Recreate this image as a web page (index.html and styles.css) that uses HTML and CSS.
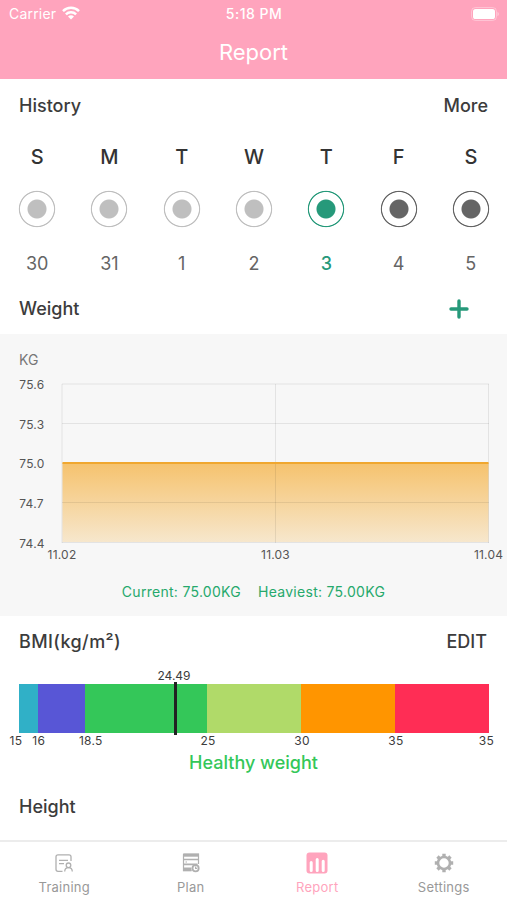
FILE: index.html
```html
<!doctype html>
<html lang="en">
<head>
    <meta charset="UTF-8">
    <meta name="viewport" content="width=device-width, initial-scale=1.0">
    <title>Report</title>
    <link rel="stylesheet" href="styles.css">
</head>
<body>
    <div class="app">
        <header class="header">
            <div class="status">
                <div class="carrier">
                    <span>Carrier</span>
                    <svg width="18" height="14" viewBox="0 0 18 14" fill="none" stroke="#fff" stroke-width="2.5">
                        <path d="M1 5.1a11.4 11.4 0 0 1 16 0"/>
                        <path d="M3.9 8.3a7.3 7.3 0 0 1 10.2 0"/>
                        <path d="M9 13.6L6 10.6a4.3 4.3 0 0 1 6 0z" fill="#fff" stroke="none"/>
                    </svg>
                </div>
                <div class="time">5:18 PM</div>
                <div class="battery">
                    <svg width="28" height="14" viewBox="0 0 28 14">
                        <rect x=".5" y=".5" width="25" height="13" rx="4" fill="none" stroke="#fff" stroke-opacity=".35"/>
                        <rect x="2" y="2" width="22" height="10" rx="2.6" fill="#fff"/>
                        <path d="M26.5 4.8q1.3.7 1.3 2.2t-1.3 2.2z" fill="#fff" fill-opacity=".45"/>
                    </svg>
                </div>
            </div>
            <h1 class="title">Report</h1>
        </header>

        <main class="main">
            <section class="history">
                <div class="row">
                    <h2>History</h2>
                    <a class="action">More</a>
                </div>
                <div class="week">
                    <div class="day past"><b>S</b><i class="ring"></i><span>30</span></div>
                    <div class="day past"><b>M</b><i class="ring"></i><span>31</span></div>
                    <div class="day past"><b>T</b><i class="ring"></i><span>1</span></div>
                    <div class="day past"><b>W</b><i class="ring"></i><span>2</span></div>
                    <div class="day today"><b>T</b><i class="ring"></i><span>3</span></div>
                    <div class="day"><b>F</b><i class="ring"></i><span>4</span></div>
                    <div class="day"><b>S</b><i class="ring"></i><span>5</span></div>
                </div>
            </section>

            <section class="weight">
                <div class="row weight-row">
                    <h2>Weight</h2>
                    <svg class="add" width="20" height="20" viewBox="0 0 20 20" stroke="#26997a" stroke-width="3.4" stroke-linecap="round">
                        <path d="M10 2v16M2 10h16"/>
                    </svg>
                </div>
                <div class="panel">
                    <svg class="chart" width="507" height="232" viewBox="0 0 507 232">
                        <defs>
                            <linearGradient id="fill" x1="0" y1="0" x2="0" y2="1">
                                <stop offset="0" stop-color="#f5a623" stop-opacity=".65"/>
                                <stop offset="1" stop-color="#f5a623" stop-opacity=".2"/>
                            </linearGradient>
                        </defs>
                        <text class="unit" x="19" y="30.5">KG</text>
                        <rect x="62.5" y="129" width="426" height="79" fill="url(#fill)"/>
                        <!-- grid -->
                        <path class="grid" d="M62 50H489M62 89.5H489M62 168.5H489M62 208.5H489M62 50V209M275.5 50V209M488.5 50V209"/>
                        <path class="line" d="M62.5 129H488.5"/>
                        <g class="axis">
                            <text x="19.3" y="55">75.6</text>
                            <text x="19.3" y="94.5">75.3</text>
                            <text x="19.3" y="134">75.0</text>
                            <text x="19.3" y="173.5">74.7</text>
                            <text x="19.3" y="213.5">74.4</text>
                        </g>
                        <g class="axis dates">
                            <text x="62" y="225">11.02</text>
                            <text x="275.5" y="225">11.03</text>
                            <text x="488.5" y="225">11.04</text>
                        </g>
                    </svg>
                    <div class="summary">
                        <span>Current: 75.00KG</span>
                        <span>Heaviest: 75.00KG</span>
                    </div>
                </div>
            </section>

            <section class="bmi">
                <div class="row bmi-row">
                    <h2>BMI(kg/m²)</h2>
                    <a class="action">EDIT</a>
                </div>
                <div class="scale">
                    <div class="marker"><span>24.49</span></div>
                    <div class="seg severe"><span>15</span></div>
                    <div class="seg thin"><span>16</span></div>
                    <div class="seg healthy"><span>18.5</span></div>
                    <div class="seg over"><span>25</span></div>
                    <div class="seg obese"><span>30</span></div>
                    <div class="seg extreme"><span>35</span><span class="end">35</span></div>
                </div>
                <p class="result">Healthy weight</p>
            </section>

            <section class="row height-row">
                <h2>Height</h2>
            </section>
        </main>

        <nav class="tabs">
            <a class="tab">
                <svg width="22" height="22" viewBox="0 0 22 22" fill="none" stroke="currentColor" stroke-width="1.3">
                    <path d="M9.5 19.3H5q-2 0-2-2V4.8q0-2 2-2h11q2 0 2 2V9"/>
                    <path d="M6 8.3h9M6 11.7h5"/>
                    <circle cx="15.5" cy="13.3" r="2.3"/>
                    <path d="M11.7 19.5q.2-3.8 3.8-3.8t3.8 3.8"/>
                </svg>
                <span>Training</span>
            </a>
            <a class="tab">
                <svg width="22" height="22" viewBox="0 0 22 22" fill="none" stroke="currentColor" stroke-width="1.2">
                    <path d="M3.5 2.2h15V12M3.5 2.2v16.5h8"/>
                    <path d="M3 3.2h16" stroke-width="3"/>
                    <path d="M3.5 7.5h15M3.5 12.3h14" stroke-width="1.7"/>
                    <path d="M5.5 10h1.5"/>
                    <path d="M3 17.3h8.5" stroke-width="3.6"/>
                    <circle cx="15.6" cy="16.2" r="3.1" stroke-width="1.8"/>
                    <path d="M15.6 14.5v1.9h1.6"/>
                </svg>
                <span>Plan</span>
            </a>
            <a class="tab active">
                <svg width="22" height="22" viewBox="0 0 22 22">
                    <rect x=".5" y=".5" width="21" height="21" rx="3" fill="currentColor"/>
                    <path d="M5.2 10.5v7.9M11.2 7.5v10.9M17.2 9.3v9.1" stroke="#fff" stroke-width="3" stroke-linecap="round"/>
                </svg>
                <span>Report</span>
            </a>
            <a class="tab">
                <svg width="22" height="22" viewBox="0 0 22 22" fill="none" stroke="currentColor">
                    <circle cx="11" cy="11" r="6" stroke-width="2.6"/>
                    <path d="M11 1.8v3M11 17.2v3M1.8 11h3M17.2 11h3M4.5 4.5l2.1 2.1M15.4 15.4l2.1 2.1M4.5 17.5l2.1-2.1M15.4 6.6l2.1-2.1" stroke-width="3.4"/>
                </svg>
                <span>Settings</span>
            </a>
        </nav>
    </div>
</body>
</html>
```
FILE: styles.css
```css
* {margin: 0; padding: 0; box-sizing: border-box;}
body {
    font-family: Inter, "Liberation Sans", sans-serif;
    color: #3c3c3c;
    background: #fff;
}
svg {display: block;}
.app {
    display: flex;
    flex-direction: column;
    height: 900px;
    overflow: hidden;
}
.header {
    flex: none;
    height: 79px;
    background: #ffa4bd;
    color: #fff;
}
.status {
    display: grid;
    grid-template-columns: 1fr auto 1fr;
    align-items: center;
    height: 27px;
    padding: 0 8px 0 9px;
    font-size: 14px;
}
.carrier {
    display: flex;
    gap: 6px;
    align-items: center;
    letter-spacing: .2px;
}
.carrier svg {margin-top: -2px;}
.time {font-weight: 500; font-size: 14px; letter-spacing: .5px;}
.battery {justify-self: end;}
.title {
    line-height: 50px;
    font-size: 22px;
    font-weight: 400;
    text-align: center;
}
.main {flex: 1; min-height: 0;}
.row {
    display: flex;
    justify-content: space-between;
    align-items: center;
    height: 52px;
    padding: 0 19px;
}
h2, .action {font-size: 18px; font-weight: 500;}

/* week */
.week {
    display: grid;
    grid-template-columns: repeat(7, 1fr);
    padding-left: 1px;
}
.day {
    display: flex;
    flex-direction: column;
    align-items: center;
    color: #656565;
}
.day b {
    line-height: 52px;
    font-size: 20px;
    font-weight: 500;
    color: #333;
}
.day span {
    margin-top: 10px;
    line-height: 52px;
    font-size: 18px;
}
.ring {
    width: 38px;
    height: 38px;
    margin-top: 7px;
    border-radius: 50%;
    background: radial-gradient(circle closest-side, currentColor 9px, transparent 10px, transparent 16.6px, currentColor 17.3px, currentColor 17.8px, transparent 18.6px);
}
.past .ring {color: #bfbfbf;}
.today {color: #26997a;}
.today span {font-weight: 500;}

/* weight */
.weight-row {height: 44px; padding-right: 38px; padding-bottom: 7px;}
.panel {
    height: 282px;
    background: #f7f7f7;
}
.unit {font-size: 14px; fill: #777;}
.axis {font-size: 12px; letter-spacing: .2px; fill: #555;}
.dates {text-anchor: middle;}
.grid {fill: none; stroke: #000; stroke-opacity: .08;}
.line {stroke: #f0a72f; stroke-width: 2;}
.summary {
    display: flex;
    justify-content: center;
    gap: 17px;
    padding-top: 1px;
    line-height: 50px;
    font-size: 14px;
    letter-spacing: .28px;
    color: #26a96c;
}

/* bmi */
.bmi-row {height: 50px; padding-right: 20px;}
.bmi-row h2 {letter-spacing: .4px;}
.scale {
    position: relative;
    display: grid;
    grid-template-columns: 1fr 2.5fr 6.5fr 5fr 5fr 5fr;
    height: 49px;
    margin: 18px 18px 0 19px;
    font-size: 12px;
    letter-spacing: .3px;
}
.seg {position: relative;}
.seg span {
    position: absolute;
    top: 48px;
    left: 1px;
    line-height: 17px;
    transform: translateX(-50%);
}
.severe {background: #30b0c7;}
.severe span {left: -3px;}
.thin {background: #5856d6;}
.healthy {background: #34c759;}
.healthy span {left: 6px;}
.over {background: #b0da69;}
.obese {background: #ff9500;}
.extreme {background: #ff2d55;}
.extreme .end {left: auto; right: -5px; transform: none;}
.marker {
    position: absolute;
    z-index: 1;
    top: -2px;
    left: 155px;
    width: 3px;
    height: 53px;
    background: #222;
}
.marker span {
    position: absolute;
    bottom: 51px;
    left: 0;
    line-height: 17px;
    letter-spacing: 0;
    transform: translateX(-50%);
}
.result {
    margin-top: 15px;
    line-height: 30px;
    font-size: 18px;
    font-weight: 500;
    text-align: center;
    color: #34c759;
}
.height-row {height: 57px;}

/* tab bar */
.tabs {
    display: grid;
    grid-template-columns: repeat(4, 1fr);
    flex: none;
    height: 60px;
    padding-left: 1px;
    border-top: 2px solid #ececec;
}
.tab {
    display: flex;
    flex-direction: column;
    align-items: center;
    padding-top: 10px;
    color: #b0b0b0;
}
.tab span {
    margin-top: 4px;
    line-height: 18px;
    font-size: 13px;
    letter-spacing: .25px;
    color: #999;
}
.tab.active, .tab.active span {color: #ffa4bd;}
```
